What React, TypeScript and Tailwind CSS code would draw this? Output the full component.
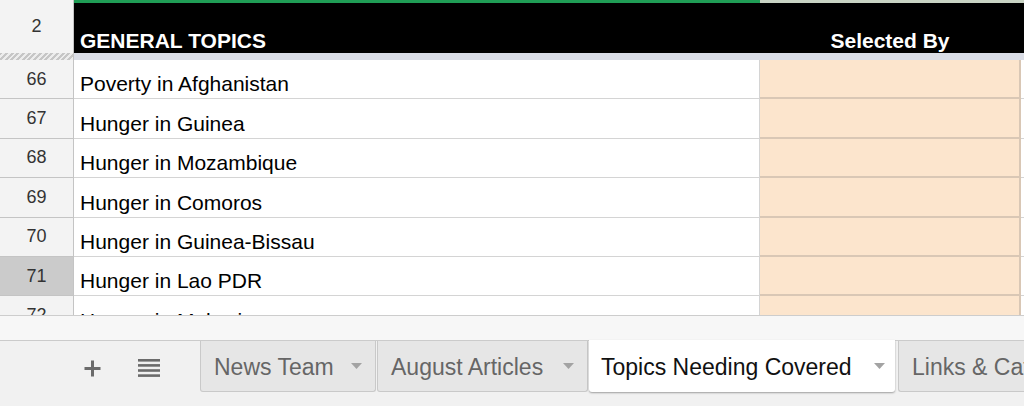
import React from "react"

const rows = [
  { n: 66, text: "Poverty in Afghanistan" },
  { n: 67, text: "Hunger in Guinea" },
  { n: 68, text: "Hunger in Mozambique" },
  { n: 69, text: "Hunger in Comoros" },
  { n: 70, text: "Hunger in Guinea-Bissau" },
  { n: 71, text: "Hunger in Lao PDR", active: true },
  { n: 72, text: "Hunger in Malawi" },
]

const tabs = [
  { name: "News Team", w: "w-[176px]" },
  { name: "August Articles", w: "w-[211px]" },
  { name: "Topics Needing Covered", w: "w-[306px]", active: true },
]

function Caret() {
  return (
    <svg width="11" height="6" viewBox="0 0 11 6" className="shrink-0">
      <path d="M0 0 L11 0 L5.5 6 Z" fill="#a3a3a3" />
    </svg>
  )
}

export default function App() {
  return (
    <div
      className="w-[1024px] h-[406px] overflow-hidden flex flex-col bg-white"
      style={{ fontFamily: '"Liberation Sans", Arial, sans-serif' }}
    >
      {/* sheet grid */}
      <div className="h-[315px] overflow-hidden flex flex-col">
        {/* frozen header row 2 */}
        <div className="flex h-[53px] shrink-0">
          <div className="w-[74px] shrink-0 bg-[#f3f3f3] border-r border-[#c4c4c4] flex items-center justify-center text-[18px] text-[#333]">
            2
          </div>
          <div className="flex-1 flex flex-col">
            <div className="flex h-[3px]">
              <div className="w-[686px] bg-[#1f9d55]" />
              <div className="flex-1 bg-[#c9d4c4]" />
            </div>
            <div className="flex-1 flex bg-black text-white font-bold text-[21px] leading-[24px]">
              <div className="w-[686px] flex items-end pl-[6px]">GENERAL TOPICS</div>
              <div className="w-[260px] flex items-end justify-center">Selected By</div>
            </div>
          </div>
        </div>

        {/* freeze bar */}
        <div className="flex h-[7px] shrink-0">
          <div className="w-[74px] shrink-0 border-r border-[#c4c4c4] bg-[repeating-linear-gradient(135deg,#c6c6c6_0px,#c6c6c6_2px,#ececec_2px,#ececec_4px)]" />
          <div className="flex-1 bg-[#dadde6]" />
        </div>

        {rows.map((r) => (
          <div key={r.n} className="flex h-[39.4px] shrink-0">
            <div
              className={`w-[74px] shrink-0 border-r border-b border-[#c4c4c4] flex items-center justify-center text-[18px] text-[#333] ${
                r.active ? "bg-[#cbcbcb]" : "bg-[#f3f3f3]"
              }`}
            >
              {r.n}
            </div>
            <div className="w-[686px] shrink-0 border-r border-b border-[#d4d4d4] flex items-end pl-[6px] pb-[2px] text-[21px] leading-[24px] text-black">
              {r.text}
            </div>
            <div className="w-[261px] shrink-0 bg-[#fce5cd] border-r-2 border-b-2 border-[#d9c7b5]" />
            <div className="flex-1 border-b border-[#d4d4d4]" />
          </div>
        ))}
      </div>

      {/* horizontal scroll strip */}
      <div className="h-[26px] shrink-0 bg-[#f7f7f7] border-t border-[#cdcdcd] border-b border-b-[#cbcbcb]" />

      {/* sheet tabs */}
      <div className="flex-1 bg-[#f1f1f1] flex items-start">
        <div className="w-[200px] shrink-0 flex items-center h-[54px] pl-[83px] gap-[36px]">
          <svg width="19" height="19" viewBox="0 0 19 19">
            <path d="M9.5 1.5 V17.5 M1.5 9.5 H17.5" stroke="#6b6b6b" strokeWidth="3" />
          </svg>
          <svg width="22" height="18" viewBox="0 0 22 18">
            <rect x="0" y="0" width="22" height="2.6" fill="#6b6b6b" />
            <rect x="0" y="5.1" width="22" height="2.6" fill="#6b6b6b" />
            <rect x="0" y="10.2" width="22" height="2.6" fill="#6b6b6b" />
            <rect x="0" y="15.3" width="22" height="2.6" fill="#6b6b6b" />
          </svg>
        </div>
        {tabs.map((t) =>
          t.active ? (
            <div
              key={t.name}
              className={`${t.w} shrink-0 h-[52px] -mt-[1px] bg-white rounded-b-[3px] shadow-[0_1px_2px_rgba(0,0,0,0.35)] flex items-center justify-between pl-[12px] pr-[10px] text-[23px] text-[#111] mr-[3px]`}
            >
              <span className="pt-[3px]">{t.name}</span>
              <Caret />
            </div>
          ) : (
            <div
              key={t.name}
              className={`${t.w} shrink-0 h-[51px] bg-[#e6e6e6] border border-t-0 border-[#c9c9c9] rounded-b-[3px] flex items-center justify-between pl-[13px] pr-[13px] text-[23px] text-[#666] mr-[1px]`}
            >
              <span className="pt-[2px]">{t.name}</span>
              <Caret />
            </div>
          )
        )}
        <div className="flex-1 h-[51px] bg-[#e6e6e6] border border-t-0 border-r-0 border-[#c9c9c9] rounded-bl-[3px] flex items-center pl-[13px] text-[23px] text-[#666] whitespace-nowrap overflow-hidden">
          <span className="pt-[2px]">Links &amp; Categories</span>
        </div>
      </div>
    </div>
  )
}
